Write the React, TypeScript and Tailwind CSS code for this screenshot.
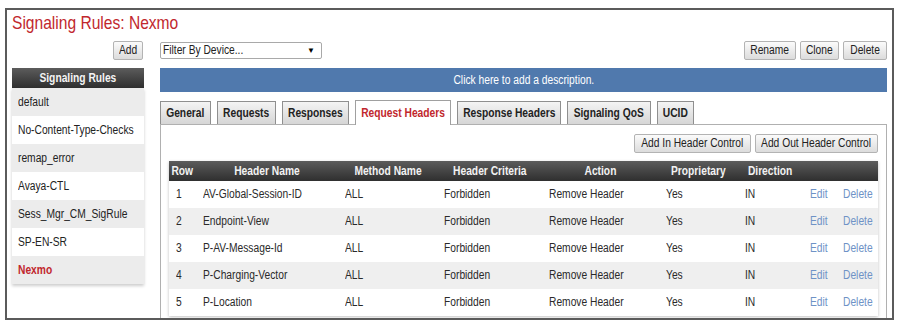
import React from "react";

const FONT = { fontFamily: "'Liberation Sans', Arial, sans-serif" };

const T = ({ children, c }: { children: React.ReactNode; c?: boolean }) => (
  <span
    className={`inline-block whitespace-nowrap scale-x-[0.82] ${c ? "origin-center" : "origin-left"}`}
  >
    {children}
  </span>
);

const Btn = ({ children, w }: { children: React.ReactNode; w: string }) => (
  <div
    className={`${w} h-[19px] flex items-center justify-center border border-[#b3b3b3] rounded-[2px] bg-gradient-to-b from-[#fbfbfb] to-[#dcdcdc] text-[12.5px] text-[#222] leading-none`}
  >
    <T c>{children}</T>
  </div>
);

const rules = [
  "default",
  "No-Content-Type-Checks",
  "remap_error",
  "Avaya-CTL",
  "Sess_Mgr_CM_SigRule",
  "SP-EN-SR",
  "Nexmo",
];

const tabs: { label: string; w: string; active?: boolean }[] = [
  { label: "General", w: "w-[51px]" },
  { label: "Requests", w: "w-[59px]" },
  { label: "Responses", w: "w-[67px]" },
  { label: "Request Headers", w: "w-[96px]", active: true },
  { label: "Response Headers", w: "w-[104px]" },
  { label: "Signaling QoS", w: "w-[84px]" },
  { label: "UCID", w: "w-[37px]" },
];

const rows = [
  ["1", "AV-Global-Session-ID"],
  ["2", "Endpoint-View"],
  ["3", "P-AV-Message-Id"],
  ["4", "P-Charging-Vector"],
  ["5", "P-Location"],
];

const COLS = "grid grid-cols-[27px_142px_99px_105px_117px_79px_65px_33px_42px]";

const headers = ["Row", "Header Name", "Method Name", "Header Criteria", "Action", "Proprietary", "Direction"];

export default function App() {
  return (
    <div className="w-[900px] h-[330px] bg-white pt-[8px] pl-[5px] overflow-hidden" style={FONT}>
      <div className="w-[889px] h-[312px] border-2 border-[#5b5b5b] px-[5px] overflow-hidden">
        <div className="h-[24px] mt-[1px] leading-[24px] text-[19px] text-[#c1272d]">
          <T>Signaling Rules: Nexmo</T>
        </div>
        <div className="flex gap-[16px] mt-[6px]">
          {/* Left column */}
          <div className="w-[132px] flex flex-col">
            <div className="flex justify-end pr-[1px]">
              <Btn w="w-[30px]">Add</Btn>
            </div>
            <div className="mt-[8px] h-[20px] flex items-center justify-center bg-gradient-to-b from-[#5c5c5c] to-[#2f2f2f] text-[#f4f4f4] text-[12.5px] font-bold">
              <T c>Signaling Rules</T>
            </div>
            <div className="shadow-[0_2px_3px_rgba(0,0,0,0.2)]">
              {rules.map((r, i) => (
                <div
                  key={r}
                  className={`h-[28px] flex items-center pl-[6px] text-[12.5px] ${
                    i % 2 === 0 ? "bg-[#ececec]" : "bg-white"
                  } ${r === "Nexmo" ? "text-[#c1272d] font-bold" : "text-[#222]"}`}
                >
                  <T>{r}</T>
                </div>
              ))}
            </div>
          </div>

          {/* Right column */}
          <div className="w-[727px] flex flex-col">
            <div className="flex items-center h-[19px]">
              <div className="w-[162px] h-[17px] border border-[#a9a9a9] rounded-[2px] bg-white flex items-center justify-between pl-[2px] pr-[6px] text-[12.5px] text-[#222]">
                <T>Filter By Device...</T>
                <span className="text-[8px] text-black">▼</span>
              </div>
              <div className="ml-auto flex gap-[4px]">
                <Btn w="w-[52px]">Rename</Btn>
                <Btn w="w-[39px]">Clone</Btn>
                <Btn w="w-[44px]">Delete</Btn>
              </div>
            </div>
            <div className="mt-[8px] h-[24px] bg-[#5079ad] flex items-center justify-center text-white text-[12.5px]">
              <T c>Click here to add a description.</T>
            </div>
            <div className="mt-[8px] flex gap-[6px] items-end h-[24px]">
              {tabs.map((t) =>
                t.active ? (
                  <div
                    key={t.label}
                    className={`${t.w} h-[25px] -mb-[1px] relative z-10 bg-white border border-b-0 border-[#a0a0a0] flex items-center justify-center text-[12.5px] font-bold text-[#c1272d]`}
                  >
                    <T c>{t.label}</T>
                  </div>
                ) : (
                  <div
                    key={t.label}
                    className={`${t.w} h-[23px] bg-gradient-to-b from-[#f4f4f4] to-[#d6d6d6] border border-b-0 border-[#8f8f8f] flex items-center justify-center text-[12.5px] font-bold text-[#222]`}
                  >
                    <T c>{t.label}</T>
                  </div>
                )
              )}
            </div>
            <div className="h-[200px] border border-b-0 border-[#b0b0b0] pt-[9px] pl-[8px] pr-[8px]">
              <div className="flex justify-end gap-[4px]">
                <Btn w="w-[117px]">Add In Header Control</Btn>
                <Btn w="w-[123px]">Add Out Header Control</Btn>
              </div>
              <div className="mt-[8px] w-[709px] shadow-[0_1px_3px_rgba(0,0,0,0.25)]">
                <div className={`${COLS} h-[20px] items-center bg-gradient-to-b from-[#5c5c5c] to-[#2f2f2f] text-[12.5px] font-bold text-[#f2f2f2]`}>
                  {headers.map((h) => (
                    <div key={h} className="flex justify-center">
                      <T c>{h}</T>
                    </div>
                  ))}
                  <div></div>
                  <div></div>
                </div>
                {rows.map(([n, name], i) => (
                  <div
                    key={n}
                    className={`${COLS} h-[27px] items-center text-[12.5px] text-[#2a2a2a] ${
                      i % 2 === 1 ? "bg-[#efefef]" : "bg-white"
                    }`}
                  >
                    <div className="pl-[7px]"><T>{n}</T></div>
                    <div className="pl-[7px]"><T>{name}</T></div>
                    <div className="pl-[7px]"><T>ALL</T></div>
                    <div className="pl-[7px]"><T>Forbidden</T></div>
                    <div className="pl-[7px]"><T>Remove Header</T></div>
                    <div className="pl-[7px]"><T>Yes</T></div>
                    <div className="pl-[7px]"><T>IN</T></div>
                    <div className="pl-[7px] text-[#6e92c6]"><T>Edit</T></div>
                    <div className="pl-[7px] text-[#6e92c6]"><T>Delete</T></div>
                  </div>
                ))}
              </div>
            </div>
          </div>
        </div>
      </div>
    </div>
  );
}
